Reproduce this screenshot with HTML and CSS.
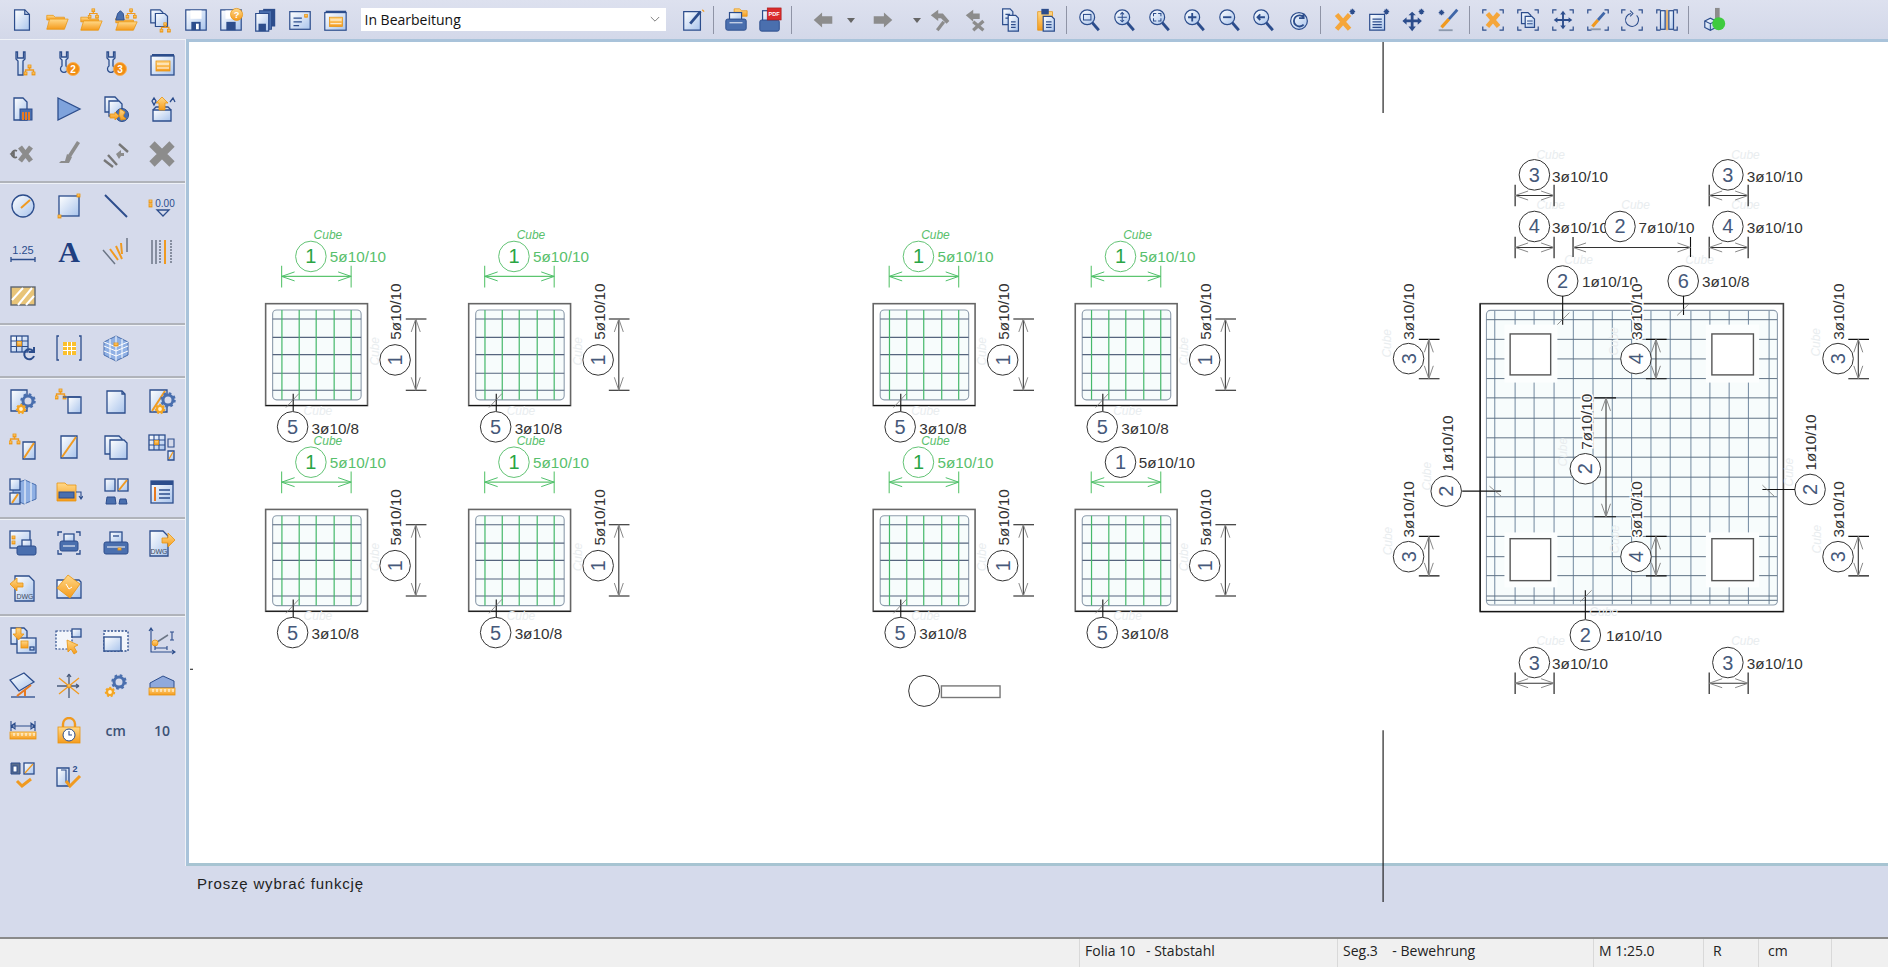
FILE: index.html
```html
<!DOCTYPE html>
<html lang="de">
<head>
  <meta charset="UTF-8" />
  <title>Bewehrung</title>
  <link rel="stylesheet" href="styles.css">
</head>
<body>
  <svg class="sprites" aria-hidden="true">
    <defs>
      <linearGradient id="gb" x1="0" y1="0" x2="1" y2="1"><stop offset="0" stop-color="#ffffff"/><stop offset="1" stop-color="#a9c4ec"/></linearGradient>
      <linearGradient id="ga" x1="0" y1="0" x2="0" y2="1"><stop offset="0" stop-color="#ffd98a"/><stop offset="1" stop-color="#f59b1c"/></linearGradient>
      <marker id="ah" markerUnits="userSpaceOnUse" orient="auto-start-reverse" overflow="visible" markerWidth="14" markerHeight="10"><path class="head" d="M-13 -4.5L0 0L-13 4.5"/></marker>
      <marker id="ahg" markerUnits="userSpaceOnUse" orient="auto-start-reverse" overflow="visible" markerWidth="14" markerHeight="10"><path class="head-g" d="M-13 -4.5L0 0L-13 4.5"/></marker>

      <g id="tree"><rect class="a" x="4" y="0" width="3" height="3"/><path class="so" d="M5.5 3v2M1.5 7V5h8v2"/><rect class="a" x="0" y="7" width="3" height="3"/><rect class="a" x="8" y="7" width="3" height="3"/></g>
      <g id="gear"><circle class="gear" r="5"/><circle class="gear-t" r="6.5"/></g>
      <g id="gear-o"><circle class="gear-a" r="3"/><circle class="gear-at" r="4.2"/></g>
      <g id="brk"><path class="s" d="M3 7V3h4M21 3h4v4M25 21v4h-4M7 25H3v-4"/></g>
      <g id="mag"><circle class="o" cx="11" cy="11" r="8"/><path class="h" d="M16.5 17l7 8"/></g>
      <path id="star-b" class="s" d="M0 -3v6M-3 0h6M-2 -2l4 4M2 -2l-4 4"/>

      <symbol id="doc" viewBox="0 0 28 28"><path class="o" d="M6 3h11l5 5v17H6z"/><path class="s" d="M17 3v5h5"/></symbol>
      <symbol id="folder" viewBox="0 0 28 28"><path class="a" d="M3 9h7l2 2h10v3H3z"/><path class="a" d="M3 24l3-11h20l-4 11z"/></symbol>
      <symbol id="folder-t" viewBox="0 0 28 28"><path class="a" d="M3 11h7l2 2h10v3H3z"/><path class="a" d="M3 25l3-10h20l-4 10z"/><use href="#tree" x="11" y="2"/></symbol>
      <symbol id="folder-b" viewBox="0 0 28 28"><path class="a" d="M3 12h7l2 2h10v3H3z"/><path class="a" d="M3 25l3-9h20l-4 9z"/><path class="db" d="M3 14l2-7 3-3 3 3 1 7z"/><use href="#tree" x="14" y="2"/></symbol>
      <symbol id="docs-t" viewBox="0 0 28 28"><path class="o" d="M3 3h10l3 3v11H3z"/><path class="o" d="M8 7h10l3 3v11H8z"/><use href="#tree" x="13" y="17"/></symbol>
      <symbol id="save" viewBox="0 0 28 28"><path class="o" d="M3 3h22v22H3z"/><rect class="w" x="8" y="3.700" width="12" height="9"/><rect class="d" x="9" y="16" width="10" height="9"/><rect class="w" x="14" y="18" width="3" height="6"/></symbol>
      <symbol id="save-q" viewBox="0 0 28 28"><path class="o" d="M3 3h22v22H3z"/><rect class="w" x="8" y="3.700" width="8" height="9"/><rect class="d" x="9" y="16" width="10" height="9"/><circle class="a" cx="20" cy="8" r="6.500"/><text class="ic-t-w" x="20" y="12">?</text></symbol>
      <symbol id="save-all" viewBox="0 0 28 28"><rect class="d" x="12" y="2" width="13" height="19"/><rect class="db" x="8" y="4" width="13" height="20"/><path class="o" d="M4 7h14v19H4z"/><rect class="d" x="7" y="18" width="8" height="8"/></symbol>
      <symbol id="card" viewBox="0 0 28 28"><rect class="o" x="3" y="5" width="22" height="19"/><path class="s" d="M7 12h9M7 16h9M7 20h6"/><rect class="a" x="19" y="8" width="3" height="3"/></symbol>
      <symbol id="list" viewBox="0 0 28 28"><path class="d" d="M4 4h22v3H4z"/><rect class="o" x="3" y="6" width="23" height="19"/><rect class="a" x="8" y="11" width="14" height="10"/><path class="sw" d="M9 14h12M9 18h12"/></symbol>
      <symbol id="edit" viewBox="0 0 28 28"><path class="o" d="M4 5h18v20H4z"/><path class="h" d="M11 18l11-13"/><path class="so" d="M24 3l2 2"/></symbol>
      <symbol id="print-f" viewBox="0 0 28 28"><path class="a" d="M12 2h6l2 2h6v6H12z"/><rect class="o" x="7" y="6" width="13" height="9"/><rect class="db" x="3" y="13" width="22" height="12" rx="2"/><path class="sw" d="M7 17h14"/></symbol>
      <symbol id="print-p" viewBox="0 0 28 28"><rect class="o" x="6" y="4" width="13" height="11"/><rect class="db" x="3" y="14" width="21" height="12" rx="2"/><rect class="red" x="11" y="1" width="15" height="13"/><text class="ic-t-p" x="18.500" y="10">PDF</text></symbol>
      <symbol id="arr-l" viewBox="0 0 28 28"><path class="g" d="M4 14l9-8v4h11v8H13v4z"/></symbol>
      <symbol id="arr-r" viewBox="0 0 28 28"><path class="g" d="M24 14l-9-8v4H4v8h11v4z"/></symbol>
      <symbol id="caret" viewBox="0 0 12 28"><path class="gd" d="M2 12h8l-4 5z"/></symbol>
      <symbol id="undo" viewBox="0 0 28 28"><path class="g" d="M3 9l8-6v4h5l7 8-3 3-6-6h-3v3z"/><path class="hg3" d="M10 25l7-9"/></symbol>
      <symbol id="redo" viewBox="0 0 28 28"><path class="g" d="M3 9l8-6v4h7v6h-7v3z"/><path class="hg3" d="M11 16l11 9M22 15L11 25"/></symbol>
      <symbol id="copy" viewBox="0 0 28 28"><path class="o" d="M5 2h8l3 3v14H5z"/><path class="o" d="M11 9h8l3 3v14H11z"/><path class="s" d="M8 8h5M8 12h3M14 16h5M14 19h5M14 22h5"/></symbol>
      <symbol id="paste" viewBox="0 0 28 28"><path class="a" d="M5 5h16v20H5z"/><rect class="d" x="9" y="2" width="8" height="6"/><path class="o" d="M11 10h9l3 3v13H11z"/><path class="s" d="M14 16h6M14 19h6M14 22h6"/></symbol>
      <symbol id="z-win" viewBox="0 0 28 28"><use href="#mag"/><rect class="sd" x="7" y="8" width="8" height="6"/></symbol>
      <symbol id="z-mv" viewBox="0 0 28 28"><use href="#mag"/><path class="sd" d="M11 6v10M6 11h10"/><path class="sd" d="M9 8l2-2 2 2M9 14l2 2 2-2"/></symbol>
      <symbol id="z-fit" viewBox="0 0 28 28"><use href="#mag"/><path class="sd" d="M7 10V7h3M12 7h3v3M15 12v3h-3M10 15H7v-3"/></symbol>
      <symbol id="z-in" viewBox="0 0 28 28"><use href="#mag"/><path class="hb" d="M11 6.500v9M6.500 11h9"/></symbol>
      <symbol id="z-out" viewBox="0 0 28 28"><use href="#mag"/><path class="hb" d="M6.500 11h9"/></symbol>
      <symbol id="z-back" viewBox="0 0 28 28"><use href="#mag"/><path class="hb" d="M7 11h8M10 8l-3 3 3 3"/></symbol>
      <symbol id="refresh" viewBox="0 0 28 28"><circle class="o" cx="14" cy="15" r="9"/><path class="hb" d="M19 11a6 6 0 1 0 0 8M19 7v5h-5"/></symbol>
      <symbol id="x-p" viewBox="0 0 28 28"><path class="xo" d="M6 8l14 16M20 8L6 24"/><use href="#star-b" x="23" y="5"/></symbol>
      <symbol id="doc-p" viewBox="0 0 28 28"><path class="o" d="M4 8h16v17H4z"/><path class="s" d="M7 13h10M7 16h10M7 19h10M7 22h10"/><use href="#star-b" x="22" y="5"/></symbol>
      <symbol id="mv-p" viewBox="0 0 28 28"><path class="d" d="M12 5l4 4h-2.500v4.500H18V11l4.500 4-4.500 4v-2.500h-4.500V21H16l-4 5-4-5h2.500v-4.500H6V19l-4.500-4L6 11v2.500h4.500V9H8z"/><use href="#star-b" x="22" y="5"/></symbol>
      <symbol id="pen-p" viewBox="0 0 28 28"><path class="hg" d="M4 25h15"/><path class="ha" d="M7 22l8-9"/><path class="hb3" d="M15 13l9-10"/><use href="#star-b" x="7" y="6"/></symbol>
      <symbol id="b-x" viewBox="0 0 28 28"><use href="#brk"/><path class="xo" d="M8 7l12 14M20 7L8 21"/></symbol>
      <symbol id="b-doc" viewBox="0 0 28 28"><use href="#brk"/><path class="o" d="M7 6h7l3 3v9H7z"/><path class="o" d="M11 10h7l3 3v9H11z"/><path class="sd" d="M13 15h6M13 18h6"/></symbol>
      <symbol id="b-mv" viewBox="0 0 28 28"><use href="#brk"/><path class="hb" d="M14 6v16M6 14h16"/><path class="d" d="M11 8l3-4 3 4zM11 20l3 4 3-4zM8 11l-4 3 4 3zM20 11l4 3-4 3z"/></symbol>
      <symbol id="b-pen" viewBox="0 0 28 28"><use href="#brk"/><path class="hg" d="M6 24h11"/><path class="ha" d="M8 21l6-7"/><path class="hb3" d="M14 14l7-8"/></symbol>
      <symbol id="b-rot" viewBox="0 0 28 28"><use href="#brk"/><path class="sd" d="M19 9a7 7 0 1 1-6-2M12 4l3 3-3 3"/></symbol>
      <symbol id="b-col" viewBox="0 0 28 28"><use href="#brk"/><rect class="o" x="7" y="4" width="5" height="20"/><rect class="o" x="16" y="4" width="5" height="20"/><path class="so" d="M14 3v22"/></symbol>
      <symbol id="globe" viewBox="0 0 28 28"><rect class="g" x="14" y="1" width="5" height="12"/><path class="o" d="M3 15l6-3 6 3v7l-6 3-6-3z"/><path class="sd" d="M3 15l6 3 6-3M9 18v7"/><circle class="green" cx="18" cy="18" r="7"/></symbol>

      <symbol id="wr-t" viewBox="0 0 28 28"><path class="o" d="M7 2v7l2 2v14h5V11l2-2V2l-1.500 0v6h-6V2z"/><use href="#tree" x="15" y="15"/></symbol>
      <symbol id="wr-2" viewBox="0 0 28 28"><path class="o" d="M5 2v6l2 2v6a3.500 3.500 0 1 0 4 0v-6l2-2V2h-1.500v5h-5V2z"/><circle class="a2" cx="18" cy="19" r="6.500"/><text class="ic-t-w" x="18" y="23">2</text></symbol>
      <symbol id="wr-3" viewBox="0 0 28 28"><path class="o" d="M5 2v6l2 2v6a3.500 3.500 0 1 0 4 0v-6l2-2V2h-1.500v5h-5V2z"/><circle class="a2" cx="18" cy="19" r="6.500"/><text class="ic-t-w" x="18" y="23">3</text></symbol>
      <symbol id="doc-c" viewBox="0 0 28 28"><path class="o" d="M5 3h9l4 4v18H5z"/><rect class="db" x="11" y="14" width="12" height="11"/><path class="sa" d="M14 17v8M17 17v8M20 17v8"/></symbol>
      <symbol id="play" viewBox="0 0 28 28"><path class="op" d="M3 3l22 11L3 25z"/></symbol>
      <symbol id="docs-g" viewBox="0 0 28 28"><path class="o" d="M3 2h10l3 3v12H3z"/><path class="o" d="M7 6h10l3 3v12H7z"/><circle class="db" cx="20" cy="20" r="6.500"/><path class="a" d="M18 14l5 3-2 4 3 3-5 1-2-5zM8 19h5v-2l4 4-4 4v-2H8z"/></symbol>
      <symbol id="box-up" viewBox="0 0 28 28"><path class="o" d="M5 15h18v11H5z"/><path class="s" d="M5 15l3-3h12l3 3"/><path class="a" d="M14 2l6 6h-3v7h-6V8H8z"/><path class="s" d="M4 6l2-3 2 3-2 4zM22 7l3-4 2 4"/></symbol>
      <symbol id="g-x1" viewBox="0 0 28 28"><path class="xg" d="M11 7l11 14M22 7L11 21"/><path class="gd-s" d="M8 11a3.500 3.500 0 1 0 0 6M2 14l3-2v4z"/></symbol>
      <symbol id="g-brush" viewBox="0 0 28 28"><path class="g" d="M22 1l3 2-9 14-3-2z"/><path class="g" d="M12 14l5 3-3 6H4l2-2h4z"/></symbol>
      <symbol id="g-lines" viewBox="0 0 28 28"><path class="hg2" d="M2 20l9 7M6 15l9 10M17 4l9 8"/><path class="g" d="M14 14l5-4v3h3v3h-3l-2 3z"/></symbol>
      <symbol id="g-x" viewBox="0 0 28 28"><path class="xg2" d="M4 4l20 20M24 4L4 24"/></symbol>
      <symbol id="dial" viewBox="0 0 28 28"><circle class="o" cx="14" cy="14" r="11"/><path class="so2" d="M12 16l9-8"/></symbol>
      <symbol id="rect" viewBox="0 0 28 28"><rect class="o" x="4" y="4" width="20" height="20"/><rect class="a" x="22" y="2" width="3" height="3"/><rect class="a" x="3" y="23" width="3" height="3"/></symbol>
      <symbol id="line" viewBox="0 0 28 28"><path class="hb" d="M3 3l22 22"/></symbol>
      <symbol id="level" viewBox="0 0 28 28"><text class="ic-t-d" x="17" y="15">0.00</text><path class="s" d="M9 18h12l-6 6z"/><rect class="a" x="1" y="8" width="3" height="3"/><rect class="a" x="1" y="12" width="3" height="3"/></symbol>
      <symbol id="dim" viewBox="0 0 28 28"><text class="ic-t-l" x="14" y="17">1.25</text><path class="s" d="M2 20v5M26 20v5M2 22.500h24"/></symbol>
      <symbol id="letter" viewBox="0 0 28 28"><text class="ic-t-a" x="14" y="25">A</text></symbol>
      <symbol id="l-o" viewBox="0 0 28 28"><path class="sg" d="M1 13l12 14M25 1v14"/><path class="so2" d="M8 12l8 11M14 9l6 13M19 6l1 11"/></symbol>
      <symbol id="l-v" viewBox="0 0 28 28"><path class="sg" d="M4 3v24M8 3v24"/><path class="sg-d" d="M12 3v24M23 3v24"/><path class="so2" d="M17 3v24"/></symbol>
      <symbol id="hatch" viewBox="0 0 28 28"><rect class="a3" x="2" y="5" width="24" height="18"/><path class="sw2" d="M3 18L14 6M9 23l14-17M17 23l8-9"/></symbol>
      <symbol id="g-ref" viewBox="0 0 28 28"><rect class="o" x="2" y="2" width="17" height="16"/><path class="sd" d="M2 7h17M2 12.500h17M7.500 2v16M13 2v16"/><rect class="a" x="8" y="7.500" width="4.500" height="4.500"/><path class="hb" d="M24 17a5 5 0 1 0 1 5M25 13v5h-5"/></symbol>
      <symbol id="b-g" viewBox="0 0 28 28"><path class="s" d="M4 2H2v24h2M24 2h2v24h-2"/><rect class="ye" x="8" y="8" width="13" height="13"/><path class="sw" d="M8 12.500h13M8 16.500h13M12.500 8v13M16.500 8v13"/></symbol>
      <symbol id="cube" viewBox="0 0 28 28"><path class="cu" d="M2 8l12-6 12 6v13l-12 6-12-6z"/><path class="sw" d="M2 12l12 5 12-5M2 17l12 5 12-5M8 5v19M14 2v25M20 5v19M2 8l12 5 12-5"/><rect class="a" x="12" y="9" width="4" height="3"/></symbol>
      <symbol id="p-gear" viewBox="0 0 28 28"><path class="o" d="M2 2h16v21H2z"/><use href="#gear" x="19" y="13"/><use href="#gear-o" x="12" y="21"/></symbol>
      <symbol id="t-p" viewBox="0 0 28 28"><use href="#tree" x="0" y="1"/><path class="o" d="M13 9h13v16H13z"/><path class="s" d="M8 9h17"/></symbol>
      <symbol id="page" viewBox="0 0 28 28"><path class="o" d="M5 3h15l3 3v19H5z"/><path class="s" d="M20 3v3h3"/></symbol>
      <symbol id="p-sg" viewBox="0 0 28 28"><path class="o" d="M2 2h17v22H2z"/><path class="so2" d="M4 23L17 3"/><use href="#gear" x="20" y="12"/><use href="#gear-o" x="12" y="21"/></symbol>
      <symbol id="t-s" viewBox="0 0 28 28"><use href="#tree" x="0" y="1"/><path class="o" d="M14 9h12v17H14z"/><path class="so2" d="M15 25L25 10"/></symbol>
      <symbol id="s-p" viewBox="0 0 28 28"><path class="o" d="M6 3h16v22H6z"/><path class="so2" d="M7 24L21 4"/></symbol>
      <symbol id="pages" viewBox="0 0 28 28"><path class="o" d="M3 3h14l3 3v15H3z"/><path class="o" d="M8 7h14l3 3v16H8z"/></symbol>
      <symbol id="g-p" viewBox="0 0 28 28"><rect class="o" x="1" y="2" width="16" height="15"/><path class="sd" d="M1 7h16M1 12h16M6 2v15M11 2v15"/><rect class="a" x="6.500" y="7.500" width="4" height="4"/><path class="sd" d="M20 6h6v8h-6z"/><path class="o" d="M20 18h6v9h-6z"/><path class="so" d="M21 26l4-7"/></symbol>
      <symbol id="c-p" viewBox="0 0 28 28"><path class="cu" d="M4 6l12-4 11 5v14l-12 5-11-5z"/><path class="sw" d="M16 2v24M22 4v20"/><rect class="o" x="1" y="1" width="10" height="11"/><rect class="o" x="1" y="15" width="10" height="11"/><path class="so2" d="M3 25l6-9"/></symbol>
      <symbol id="f-a" viewBox="0 0 28 28"><path class="a" d="M2 5h8l2 2h9v16H2z"/><rect class="db" x="4" y="14" width="15" height="6"/><path class="sd" d="M21 14h5v6M24 18l2 3 2-3"/></symbol>
      <symbol id="p-w" viewBox="0 0 28 28"><rect class="o" x="3" y="1" width="10" height="12"/><rect class="o" x="16" y="1" width="10" height="12"/><path class="so2" d="M17 12l8-10"/><path class="db" d="M4 26l1-7h8l1 7zM17 26l1-5h6l1 5z"/></symbol>
      <symbol id="panel" viewBox="0 0 28 28"><rect class="o" x="3" y="3" width="22" height="22"/><path class="d" d="M3 3h22v4H3z"/><path class="sa" d="M7 9v14"/><path class="s" d="M11 12h11M11 16h11M11 20h11"/></symbol>
      <symbol id="w-print" viewBox="0 0 28 28"><rect class="o" x="1" y="2" width="20" height="17"/><rect class="a" x="3" y="7" width="3" height="3"/><rect class="a" x="3" y="12" width="3" height="3"/><rect class="o" x="13" y="11" width="9" height="8"/><rect class="db" x="8" y="17" width="19" height="9" rx="2"/></symbol>
      <symbol id="b-print" viewBox="0 0 28 28"><use href="#brk"/><rect class="o" x="9" y="5" width="10" height="8"/><rect class="db" x="5" y="12" width="18" height="10" rx="2"/><path class="sw" d="M8 17h12"/></symbol>
      <symbol id="print" viewBox="0 0 28 28"><rect class="o" x="8" y="3" width="12" height="11"/><path class="s" d="M11 7h6"/><rect class="db" x="2" y="13" width="24" height="12" rx="2"/><path class="sw" d="M5 18h18"/><rect class="a" x="16" y="19" width="3" height="2"/></symbol>
      <symbol id="dwg-o" viewBox="0 0 28 28"><path class="o" d="M2 2h13l5 5v20H2z"/><path class="a" d="M14 9h6V4l7 7-7 7v-4h-6z"/><text class="ic-t-s" x="11" y="25">DWG</text></symbol>
      <symbol id="dwg-i" viewBox="0 0 28 28"><path class="o" d="M6 2h14l5 5v20H6z"/><path class="a" d="M14 9H8V4l-7 6 7 7v-4h6z"/><text class="ic-t-s" x="16" y="25">DWG</text></symbol>
      <symbol id="tag" viewBox="0 0 28 28"><path class="o" d="M2 6h22l2 2v16H2z"/><path class="a" d="M13 1l12 9-10 14L2 14z"/><path class="sw" d="M11 10l3 5 3-2"/></symbol>
      <symbol id="d-dn" viewBox="0 0 28 28"><path class="o" d="M2 1h13l3 3v13H2z"/><rect class="o" x="8" y="11" width="19" height="15"/><rect class="a" x="12" y="14" width="7" height="7"/><path class="a" d="M7 1h5v6h3l-5.500 6L4 7h3z"/><rect class="s" x="21" y="20" width="4" height="3"/></symbol>
      <symbol id="s-cur" viewBox="0 0 28 28"><rect class="sdash" x="1" y="4" width="16" height="18"/><rect class="o" x="17" y="2" width="9" height="8"/><path class="a" d="M12 13l11 5-4 2 3 5-3 2-3-5-3 3z"/></symbol>
      <symbol id="d-win" viewBox="0 0 28 28"><rect class="sdash2" x="2" y="4" width="24" height="20"/><rect class="o" x="2" y="10" width="17" height="14"/></symbol>
      <symbol id="axes" viewBox="0 0 28 28"><path class="sd" d="M3 1v24h24M1 4l2-3 2 3M24 23l3 2-3 2"/><path class="sg" d="M6 17l14-9"/><circle class="a" cx="7" cy="16" r="3"/><path class="sd" d="M22 5h4M24 5v8M22 13h4M7 21h12M7 19v4M19 19v4"/></symbol>
      <symbol id="plane" viewBox="0 0 28 28"><path class="o" d="M1 8L15 1l10 9-15 9z"/><path class="s" d="M2 25h24"/><path class="sa" d="M8 24l14-11M16 24v-6"/></symbol>
      <symbol id="star" viewBox="0 0 28 28"><path class="so" d="M4 6l20 16M24 6L4 22"/><path class="sg-d2" d="M14 2v24M2 14h22M14 2l-2 3M14 2l2 3M24 14l-3-2M24 14l-3 2"/><circle class="a" cx="14" cy="14" r="2"/></symbol>
      <symbol id="gears" viewBox="0 0 28 28"><use href="#gear" x="17" y="10"/><use href="#gear-o" x="8" y="20"/></symbol>
      <symbol id="ruler-r" viewBox="0 0 28 28"><path class="db2" d="M2 16V11L15 4l11 5v7z"/><rect class="a" x="1" y="16" width="26" height="7"/><path class="sw" d="M5 17v3M9 17v3M13 17v3M17 17v3M21 17v3M25 17v3"/></symbol>
      <symbol id="ruler-d" viewBox="0 0 28 28"><path class="sd" d="M2 4v10M26 4v10M2 9h24M2 9l4-3v6zM26 9l-4-3v6z"/><rect class="a" x="1" y="15" width="26" height="7"/><path class="sw" d="M5 16v3M9 16v3M13 16v3M17 16v3M21 16v3M25 16v3"/></symbol>
      <symbol id="lock" viewBox="0 0 28 28"><path class="sa3" d="M8 11V7a6 6 0 0 1 12 0v4"/><rect class="a" x="3" y="10" width="22" height="16"/><circle class="w-s" cx="14" cy="18" r="6"/><path class="sd" d="M14 14v4h3"/></symbol>
      <symbol id="pp-c" viewBox="0 0 28 28"><path class="gp" d="M2 1h9v11H2z"/><rect class="w-s" x="4" y="4" width="4" height="6"/><rect class="o" x="15" y="1" width="10" height="11"/><path class="so" d="M16 11l8-9"/><path class="so3" d="M8 19l5 5 9-7"/></symbol>
      <symbol id="p2-c" viewBox="0 0 28 28"><path class="o" d="M2 6h12v18H2z"/><path class="sd" d="M6 8h5v12"/><text class="ic-t-sup" x="20" y="10">2</text><path class="so3" d="M11 19l4 5 10-10"/></symbol>

      <g id="n1" class="cad"><circle class="bub" r="15.300"/><text class="num" y="7">1</text></g>
      <g id="n2" class="cad"><circle class="bub" r="15.300"/><text class="num" y="7">2</text></g>
      <g id="n3" class="cad"><circle class="bub" r="15.300"/><text class="num" y="7">3</text></g>
      <g id="n4" class="cad"><circle class="bub" r="15.300"/><text class="num" y="7">4</text></g>
      <g id="n5" class="cad"><circle class="bub" r="15.300"/><text class="num" y="7">5</text></g>
      <g id="n6" class="cad"><circle class="bub" r="15.300"/><text class="num" y="7">6</text></g>
      <g id="ng" class="cad"><circle class="bub-g" r="15.300"/><text class="num-g" y="7">1</text></g>

      <g id="dim-g"><path class="tick-g" d="M16 -38V-16.300M85.600 -38V-16.300"/><path class="dim-g" d="M16 -27.300H85.600"/></g>
      <g id="top-g" class="cad"><text class="cube-g" x="48" y="-65">Cube</text><use href="#ng" x="45.300" y="-47.300"/><text class="lab-g" x="64.300" y="-41.700">5ø10/10</text><use href="#dim-g"/></g>

      <g id="sec" class="cad">
        <rect class="out" width="102" height="102"/>
        <path class="out-d" d="M0 102H102"/>
        <rect class="inner" x="7" y="6.300" width="88.600" height="90" rx="4"/>
        <path class="bar-k" d="M7 15.300H95.600M7 33.700H95.600M7 51H95.600M7 69.700H95.600M7 86.700H95.600"/>
        <path class="bar-g" d="M16.300 6.300V96.300M33.600 6.300V96.300M50.600 6.300V96.300M68.600 6.300V96.300M85.600 6.300V96.300"/>
        <path class="ld" d="M27.600 90.300V108"/>
        <path class="tk" d="M20.300 104L33.300 90"/>
        <text class="cube-f" x="38" y="111">Cube</text>
        <use href="#n5" x="27" y="123.300"/>
        <text class="lab" x="46" y="130">3ø10/8</text>
        <path class="ld" d="M140.300 15.300H161M140.300 86.700H161"/>
        <path class="dim" d="M150.300 15.300V86.700"/>
        <use href="#n1" transform="translate(129.600 56.300) rotate(-90)"/>
        <text class="lab" transform="translate(136 36) rotate(-90)">5ø10/10</text>
        <text class="cube-f" transform="translate(113 62) rotate(-90)">Cube</text>
      </g>
      <g id="dh"><path class="ld" d="M0 -10.700V10.700M39 -10.700V10.700"/><path class="dim" d="M0 0H39"/></g>
      <g id="dv"><path class="ld" d="M0 0H20.700M0 39.500H20.700"/><path class="dim" d="M10 0V39.500"/></g>
    </defs>
  </svg>

  <header class="toolbar">
    <span class="tb"><svg class="ic"><use href="#doc"/></svg></span>
    <span class="tb"><svg class="ic"><use href="#folder"/></svg></span>
    <span class="tb"><svg class="ic"><use href="#folder-t"/></svg></span>
    <span class="tb"><svg class="ic"><use href="#folder-b"/></svg></span>
    <span class="tb"><svg class="ic"><use href="#docs-t"/></svg></span>
    <span class="tb"><svg class="ic"><use href="#save"/></svg></span>
    <span class="tb"><svg class="ic"><use href="#save-q"/></svg></span>
    <span class="tb"><svg class="ic"><use href="#save-all"/></svg></span>
    <span class="tb"><svg class="ic"><use href="#card"/></svg></span>
    <span class="tb"><svg class="ic"><use href="#list"/></svg></span>
    <div class="combo"><span>In Bearbeitung</span><svg class="chev" viewBox="0 0 12 8"><path d="M1 1l5 5 5-5"/></svg></div>
    <span class="tb after-combo"><svg class="ic"><use href="#edit"/></svg></span>
    <i class="sep sep-a"></i>
    <span class="tb"><svg class="ic"><use href="#print-f"/></svg></span>
    <span class="tb"><svg class="ic"><use href="#print-p"/></svg></span>
    <i class="sep sep-w"></i>
    <span class="tb nav-l"><svg class="ic"><use href="#arr-l"/></svg></span>
    <span class="tb nav-c"><svg class="ic-c"><use href="#caret"/></svg></span>
    <span class="tb nav-r"><svg class="ic"><use href="#arr-r"/></svg></span>
    <span class="tb nav-c2"><svg class="ic-c"><use href="#caret"/></svg></span>
    <span class="tb"><svg class="ic"><use href="#undo"/></svg></span>
    <span class="tb"><svg class="ic"><use href="#redo"/></svg></span>
    <span class="tb"><svg class="ic"><use href="#copy"/></svg></span>
    <span class="tb"><svg class="ic"><use href="#paste"/></svg></span>
    <i class="sep"></i>
    <span class="tb"><svg class="ic"><use href="#z-win"/></svg></span>
    <span class="tb"><svg class="ic"><use href="#z-mv"/></svg></span>
    <span class="tb"><svg class="ic"><use href="#z-fit"/></svg></span>
    <span class="tb"><svg class="ic"><use href="#z-in"/></svg></span>
    <span class="tb"><svg class="ic"><use href="#z-out"/></svg></span>
    <span class="tb"><svg class="ic"><use href="#z-back"/></svg></span>
    <span class="tb"><svg class="ic"><use href="#refresh"/></svg></span>
    <i class="sep"></i>
    <span class="tb"><svg class="ic"><use href="#x-p"/></svg></span>
    <span class="tb"><svg class="ic"><use href="#doc-p"/></svg></span>
    <span class="tb"><svg class="ic"><use href="#mv-p"/></svg></span>
    <span class="tb"><svg class="ic"><use href="#pen-p"/></svg></span>
    <i class="sep"></i>
    <span class="tb"><svg class="ic"><use href="#b-x"/></svg></span>
    <span class="tb"><svg class="ic"><use href="#b-doc"/></svg></span>
    <span class="tb"><svg class="ic"><use href="#b-mv"/></svg></span>
    <span class="tb"><svg class="ic"><use href="#b-pen"/></svg></span>
    <span class="tb"><svg class="ic"><use href="#b-rot"/></svg></span>
    <span class="tb"><svg class="ic"><use href="#b-col"/></svg></span>
    <i class="sep sep-w"></i>
    <span class="tb"><svg class="ic"><use href="#globe"/></svg></span>
  </header>

  <div class="main">
    <aside class="panel">
      <section class="pgroup g1">
        <svg class="ic"><use href="#wr-t"/></svg><svg class="ic"><use href="#wr-2"/></svg><svg class="ic"><use href="#wr-3"/></svg><svg class="ic"><use href="#list"/></svg>
        <svg class="ic"><use href="#doc-c"/></svg><svg class="ic"><use href="#play"/></svg><svg class="ic"><use href="#docs-g"/></svg><svg class="ic"><use href="#box-up"/></svg>
        <svg class="ic"><use href="#g-x1"/></svg><svg class="ic"><use href="#g-brush"/></svg><svg class="ic"><use href="#g-lines"/></svg><svg class="ic"><use href="#g-x"/></svg>
      </section>
      <section class="pgroup g2">
        <svg class="ic"><use href="#dial"/></svg><svg class="ic"><use href="#rect"/></svg><svg class="ic"><use href="#line"/></svg><svg class="ic"><use href="#level"/></svg>
        <svg class="ic"><use href="#dim"/></svg><svg class="ic"><use href="#letter"/></svg><svg class="ic"><use href="#l-o"/></svg><svg class="ic"><use href="#l-v"/></svg>
        <svg class="ic"><use href="#hatch"/></svg>
      </section>
      <section class="pgroup g3">
        <svg class="ic"><use href="#g-ref"/></svg><svg class="ic"><use href="#b-g"/></svg><svg class="ic"><use href="#cube"/></svg>
      </section>
      <section class="pgroup g4">
        <svg class="ic"><use href="#p-gear"/></svg><svg class="ic"><use href="#t-p"/></svg><svg class="ic"><use href="#page"/></svg><svg class="ic"><use href="#p-sg"/></svg>
        <svg class="ic"><use href="#t-s"/></svg><svg class="ic"><use href="#s-p"/></svg><svg class="ic"><use href="#pages"/></svg><svg class="ic"><use href="#g-p"/></svg>
        <svg class="ic"><use href="#c-p"/></svg><svg class="ic"><use href="#f-a"/></svg><svg class="ic"><use href="#p-w"/></svg><svg class="ic"><use href="#panel"/></svg>
      </section>
      <section class="pgroup g5">
        <svg class="ic"><use href="#w-print"/></svg><svg class="ic"><use href="#b-print"/></svg><svg class="ic"><use href="#print"/></svg><svg class="ic"><use href="#dwg-o"/></svg>
        <svg class="ic"><use href="#dwg-i"/></svg><svg class="ic"><use href="#tag"/></svg>
      </section>
      <section class="pgroup g6">
        <svg class="ic"><use href="#d-dn"/></svg><svg class="ic"><use href="#s-cur"/></svg><svg class="ic"><use href="#d-win"/></svg><svg class="ic"><use href="#axes"/></svg>
        <svg class="ic"><use href="#plane"/></svg><svg class="ic"><use href="#star"/></svg><svg class="ic"><use href="#gears"/></svg><svg class="ic"><use href="#ruler-r"/></svg>
        <svg class="ic"><use href="#ruler-d"/></svg><svg class="ic"><use href="#lock"/></svg><span class="ptext">cm</span><span class="ptext">10</span>
        <svg class="ic"><use href="#pp-c"/></svg><svg class="ic"><use href="#p2-c"/></svg>
      </section>
    </aside>

    <main class="canvas">
      <svg class="drawing cad" viewBox="189 42 1699 822">
        <!-- sheet frame -->
        <path class="ld" d="M1383.500 42V113M1383.500 731V903M189 670H192"/>

        <!-- first group of sections -->
        <use href="#top-g" x="264.700" y="304"/><use href="#sec" x="264.700" y="304"/>
        <use href="#top-g" x="468" y="304"/><use href="#sec" x="468" y="304"/>
        <use href="#top-g" x="264.700" y="510"/><use href="#sec" x="264.700" y="510"/>
        <use href="#top-g" x="468" y="510"/><use href="#sec" x="468" y="510"/>

        <!-- second group of sections -->
        <use href="#top-g" x="873" y="304"/><use href="#sec" x="873" y="304"/>
        <use href="#top-g" x="1075.300" y="304"/><use href="#sec" x="1075.300" y="304"/>
        <use href="#top-g" x="873" y="510"/><use href="#sec" x="873" y="510"/>
        <use href="#dim-g" x="1075.300" y="510"/><use href="#sec" x="1075.300" y="510"/>
        <use href="#n1" x="1120.600" y="462.700"/>
        <text class="lab" x="1139" y="468.500">5ø10/10</text>

        <!-- column symbol -->
        <circle class="bub" cx="924" cy="691.700" r="15.500"/>
        <rect class="out-thin" x="941.300" y="686.700" width="58.700" height="11.600"/>

        <!-- big slab -->
        <rect class="out-big" x="1480.700" y="304" width="303.600" height="308.300"/>
        <path class="out-d" d="M1480.700 612.300H1784.300M1480.700 304V612.300"/>
        <rect class="inner" x="1487" y="310.700" width="291.300" height="295" rx="4"/>
        <path class="bar-b" d="M1495.300 311V605M1515.700 311V605M1534.700 311V605M1554.700 311V605M1574 311V605M1593.700 311V605M1613 311V605M1632.300 311V605M1651.700 311V605M1671 311V605M1691.700 311V605M1710.700 311V605M1730 311V605M1749.300 311V605M1770 311V605"/>
        <path class="bar-h" d="M1487 320H1778M1487 339.700H1778M1487 359.300H1778M1487 379H1778M1487 398.300H1778M1487 418.700H1778M1487 438.300H1778M1487 457.700H1778M1487 477.700H1778M1487 497.300H1778M1487 517.300H1778M1487 537H1778M1487 557.300H1778M1487 576.300H1778M1487 596.700H1778M1487 601H1778"/>
        <rect class="halo" x="1505" y="325" width="53" height="58"/>
        <rect class="halo" x="1706.700" y="325" width="53.300" height="58"/>
        <rect class="halo" x="1505" y="533" width="53" height="55"/>
        <rect class="halo" x="1706.700" y="533" width="53.300" height="55"/>
        <rect class="hole" x="1510.700" y="334.300" width="40.600" height="41"/>
        <rect class="hole" x="1712.700" y="334.300" width="41.600" height="41"/>
        <rect class="hole" x="1510.700" y="539.300" width="40.600" height="42"/>
        <rect class="hole" x="1712.700" y="539.300" width="41.600" height="42"/>

        <!-- ghost labels -->
        <text class="cube-f" x="1537" y="159">Cube</text>
        <text class="cube-f" x="1537" y="209">Cube</text>
        <text class="cube-f" x="1622" y="209">Cube</text>
        <text class="cube-f" x="1732" y="159">Cube</text>
        <text class="cube-f" x="1732" y="209">Cube</text>
        <text class="cube-f" x="1565" y="264">Cube</text>
        <text class="cube-f" x="1686" y="264">Cube</text>
        <text class="cube-f" x="1590" y="617">Cube</text>
        <text class="cube-f" x="1537" y="646">Cube</text>
        <text class="cube-f" x="1732" y="646">Cube</text>
        <text class="cube-f" transform="translate(1391 358) rotate(-90)">Cube</text>
        <text class="cube-f" transform="translate(1821 357) rotate(-90)">Cube</text>
        <text class="cube-f" transform="translate(1619 356) rotate(-90)">Cube</text>
        <text class="cube-f" transform="translate(1568 467) rotate(-90)">Cube</text>
        <text class="cube-f" transform="translate(1431 491) rotate(-90)">Cube</text>
        <text class="cube-f" transform="translate(1794 487) rotate(-90)">Cube</text>
        <text class="cube-f" transform="translate(1392 556) rotate(-90)">Cube</text>
        <text class="cube-f" transform="translate(1822 554) rotate(-90)">Cube</text>
        <text class="cube-f" transform="translate(1620 554) rotate(-90)">Cube</text>

        <!-- slab labels, top -->
        <use href="#n3" x="1535" y="175"/><text class="lab" x="1552.700" y="182.300">3ø10/10</text>
        <use href="#dh" x="1515.700" y="195.700"/>
        <use href="#n3" x="1728.700" y="175"/><text class="lab" x="1747.700" y="182.300">3ø10/10</text>
        <use href="#dh" x="1710" y="195.700"/>
        <use href="#n4" x="1535" y="226.700"/><text class="lab" x="1552.700" y="233.300">3ø10/10</text>
        <use href="#dh" x="1515.700" y="247.700"/>
        <use href="#n2" x="1620.700" y="226.700"/><text class="lab" x="1639.300" y="233.300">7ø10/10</text>
        <path class="ld" d="M1573.700 237.300V257.300M1691.300 237.300V257.300"/><path class="dim" d="M1573.700 247.700H1691.300"/>
        <use href="#n4" x="1728.700" y="226.700"/><text class="lab" x="1747.700" y="233.300">3ø10/10</text>
        <use href="#dh" x="1710" y="247.700"/>
        <use href="#n2" x="1563.300" y="281.300"/><text class="lab" x="1582.700" y="287.700">1ø10/10</text>
        <path class="ld" d="M1563.300 296V325"/><path class="tk" d="M1558 325L1570 313"/>
        <use href="#n6" x="1684" y="281.300"/><text class="lab" x="1702.700" y="287.700">3ø10/8</text>
        <path class="ld" d="M1684.300 296V315.300"/><path class="tk" d="M1678 315.700L1690 304"/>

        <!-- slab labels, sides -->
        <use href="#n3" transform="translate(1409 359) rotate(-90)"/><text class="lab halo-t" transform="translate(1414.300 340) rotate(-90)">3ø10/10</text>
        <use href="#dv" x="1419.300" y="339.700"/>
        <use href="#n3" transform="translate(1839 359) rotate(-90)"/><text class="lab halo-t" transform="translate(1845 340) rotate(-90)">3ø10/10</text>
        <use href="#dv" x="1849.300" y="339.700"/>
        <use href="#dv" x="1646.700" y="339.700"/>
        <use href="#n4" transform="translate(1636.700 359) rotate(-90)"/><text class="lab halo-t" transform="translate(1642.700 340) rotate(-90)">3ø10/10</text>
        <path class="ld" d="M1595 398.300H1616.700M1595 517.300H1616.700"/><path class="dim" d="M1606.700 398.300V517.300"/>
        <use href="#n2" transform="translate(1586 469.300) rotate(-90)"/><text class="lab halo-t" transform="translate(1592.300 450.300) rotate(-90)">7ø10/10</text>
        <use href="#n2" transform="translate(1446.700 491.700) rotate(-90)"/><text class="lab halo-t" transform="translate(1454 472) rotate(-90)">1ø10/10</text>
        <path class="ld" d="M1462.700 491.700H1501.700"/><path class="tk" d="M1490 486.700L1501.700 496.700"/>
        <use href="#n2" transform="translate(1811 490) rotate(-90)"/><text class="lab halo-t" transform="translate(1816.700 471) rotate(-90)">1ø10/10</text>
        <path class="ld" d="M1763.300 490H1796"/><path class="tk" d="M1763.300 485.700L1775 496.700"/>
        <use href="#n3" transform="translate(1409 557.300) rotate(-90)"/><text class="lab halo-t" transform="translate(1414.300 538) rotate(-90)">3ø10/10</text>
        <use href="#dv" x="1419.300" y="537"/>
        <use href="#n3" transform="translate(1839 557.300) rotate(-90)"/><text class="lab halo-t" transform="translate(1845 538) rotate(-90)">3ø10/10</text>
        <use href="#dv" x="1849.300" y="537"/>
        <use href="#dv" x="1646.700" y="537"/>
        <use href="#n4" transform="translate(1636.700 557.300) rotate(-90)"/><text class="lab halo-t" transform="translate(1642.700 538) rotate(-90)">3ø10/10</text>

        <!-- slab labels, bottom -->
        <path class="ld" d="M1586 591V620"/><path class="tk" d="M1581 602.300L1592.300 591"/>
        <use href="#n2" x="1586" y="635.700"/><text class="lab" x="1606.700" y="641.700">1ø10/10</text>
        <use href="#n3" x="1535" y="663.300"/><text class="lab" x="1552.700" y="670">3ø10/10</text>
        <use href="#dh" x="1515.700" y="684"/>
        <use href="#n3" x="1728.700" y="663.300"/><text class="lab" x="1747.700" y="670">3ø10/10</text>
        <use href="#dh" x="1710" y="684"/>
      </svg>
    </main>
  </div>

  <div class="message">Proszę wybrać funkcję</div>

  <footer class="status">
    <div class="cell c-folia">Folia 10&nbsp;&nbsp; - Stabstahl</div>
    <div class="cell c-seg">Seg.3&nbsp;&nbsp;&nbsp; - Bewehrung</div>
    <div class="cell c-scale">M 1:25.0</div>
    <div class="cell c-r">R</div>
    <div class="cell c-unit">cm</div>
    <div class="cell c-end"></div>
  </footer>
</body>
</html>
```

FILE: styles.css
```css
* {
  box-sizing: border-box;
}
html, body {
  height: 100%;
}
body {
  margin: 0;
  display: flex;
  flex-direction: column;
  overflow: hidden;
  background: #d5daeb;
  font-family: "Open Sans", "Liberation Sans", sans-serif;
  color: #222;
}
.sprites {
  position: absolute;
  width: 0;
  height: 0;
}

/* top toolbar */
.toolbar {
  height: 39px;
  flex: none;
  display: flex;
  align-items: center;
  padding-left: 4.5px;
  background: linear-gradient(to bottom, #dde1ef, #d3d8e9);
}
.tb {
  width: 34.8px;
  height: 28px;
  flex: none;
  display: flex;
  justify-content: center;
}
.ic {
  width: 28px;
  height: 28px;
  display: block;
}
.tb .ic {
  width: 26px;
  height: 26px;
  margin-top: 1px;
}
.ic-c {
  width: 12px;
  height: 28px;
}
.nav-l { width: 44px; }
.nav-c { width: 12px; }
.nav-r { width: 53px; }
.nav-c2 { width: 14px; }
.after-combo { margin-left: 9px; }
.sep {
  width: 1px;
  height: 28px;
  flex: none;
  margin: 0 6px 0 3px;
  background: #8f94a6;
}
.sep-a { margin-right: 4px; }
.sep-w { margin-right: 9px; }
.combo {
  width: 305px;
  height: 23px;
  margin-left: 9px;
  flex: none;
  display: flex;
  align-items: center;
  justify-content: space-between;
  padding: 0 6px 0 3px;
  background: #fff;
  font-size: 14px;
  color: #111;
}
.chev {
  width: 10px;
  height: 7px;
  fill: none;
  stroke: #666;
}

/* body of the window */
.main {
  flex: 1;
  min-height: 0;
  display: flex;
}
.panel {
  width: 186px;
  flex: none;
  display: flex;
  flex-direction: column;
  border-top: 1px solid #eef1f7;
  border-right: 1px solid #eef1f7;
}
.pgroup {
  display: grid;
  grid-template-columns: repeat(4, 46.3px);
  grid-auto-rows: 45px;
  align-items: center;
  justify-items: center;
  border-bottom: 2px solid #b0b3ba;
  box-shadow: 0 1px 0 #eef1f7;
}
.g1 { padding: 1px 0 5px; }
.g2 { padding: 0 0 5px; }
.g3 { padding: 0 0 6px; }
.g4 { padding: 1px 0 3px; }
.g5 { padding: 1px 0 4px; }
.g6 { padding: 2px 0 0; border-bottom: none; box-shadow: none; }
.ptext {
  font-size: 14px;
  font-weight: 600;
  color: #3c5276;
}
.canvas {
  flex: 1;
  min-width: 0;
  background: #fff;
  border-top: 3px solid #a9c3da;
  border-left: 3px solid #a9c3da;
  border-bottom: 3px solid #a7c4d2;
}
.drawing {
  display: block;
  width: 100%;
  height: 100%;
  overflow: visible;
  position: relative;
  z-index: 1;
}

/* bottom */
.message {
  height: 71px;
  flex: none;
  padding: 9px 0 0 197px;
  font: 15px "Liberation Sans", sans-serif;
  letter-spacing: .8px;
  color: #222;
}
.status {
  height: 30px;
  flex: none;
  display: flex;
  background: #f0f0f0;
  border-top: 2px solid #8a8a8a;
  font-size: 14px;
  padding-left: 1079px;
}
.cell {
  height: 100%;
  padding: 2px 0 0 5px;
  border-left: 1px solid #d9d9d9;
  white-space: pre;
  color: #222;
}
.c-folia { width: 258px; }
.c-seg { width: 256px; }
.c-scale { width: 110px; }
.c-r { width: 55px; padding-left: 9px; }
.c-unit { width: 73px; padding-left: 9px; }
.c-end { flex: 1; }

/* icon pieces */
.o { fill: url(#gb); stroke: #2c4d8c; stroke-width: 1.3; }
.op { fill: #7fa3dc; stroke: #2c4d8c; stroke-width: 1.3; }
.d { fill: #2c4d8c; }
.db { fill: #4a6fae; stroke: #2c4d8c; stroke-width: 1; }
.db2 { fill: #8fa9dc; stroke: #2c4d8c; stroke-width: 1; }
.cu { fill: #8fb0e4; stroke: #4a6fae; stroke-width: 1; }
.a { fill: url(#ga); stroke: #e8940f; stroke-width: .8; }
.a2 { fill: #f28c12; stroke: #f7b25a; stroke-width: 1; }
.a3 { fill: #e8c478; stroke: #5c6572; stroke-width: 1.4; }
.ye { fill: #fbc02d; }
.red { fill: #d92b2b; stroke: #a01515; stroke-width: .6; }
.green { fill: #3ecb3e; }
.w { fill: #fff; }
.w-s { fill: #fff; stroke: #2c4d8c; stroke-width: 1; }
.g { fill: #8c8c8c; }
.gd { fill: #666; }
.gp { fill: #5c6e8c; stroke: #2c4d8c; }
.gd-s { fill: none; stroke: #6c6c6c; stroke-width: 1.6; }
.s { fill: none; stroke: #2c4d8c; stroke-width: 1.3; }
.sd { fill: none; stroke: #2c4d8c; stroke-width: 1.1; }
.so { fill: none; stroke: #f09a20; stroke-width: 1.3; }
.so2 { fill: none; stroke: #f09a20; stroke-width: 2; }
.so3 { fill: none; stroke: #f09a20; stroke-width: 3; }
.sa { fill: none; stroke: #e87a20; stroke-width: 2; }
.sa3 { fill: none; stroke: #f09a20; stroke-width: 2.4; }
.sg { fill: none; stroke: #6c7686; stroke-width: 1.5; }
.sg-d { fill: none; stroke: #6c7686; stroke-width: 1.5; stroke-dasharray: 2 1; }
.sg-d2 { fill: none; stroke: #4a5c7c; stroke-width: 1.3; }
.sw { fill: none; stroke: #fff; stroke-width: 1; }
.sw2 { fill: none; stroke: #fff; stroke-width: 2; }
.h { fill: none; stroke: #2c4d8c; stroke-width: 3; }
.hb { fill: none; stroke: #2c4d8c; stroke-width: 2; }
.hb3 { fill: none; stroke: #3f66a8; stroke-width: 3; }
.ha { fill: none; stroke: #f09a20; stroke-width: 3.5; }
.hg { fill: none; stroke: #8c99ad; stroke-width: 2; }
.hg2 { fill: none; stroke: #777; stroke-width: 2.4; }
.hg3 { fill: none; stroke: #8c8c8c; stroke-width: 3.5; }
.xo { fill: none; stroke: #f5a63a; stroke-width: 5; }
.xg { fill: none; stroke: #8c8c8c; stroke-width: 5; }
.xg2 { fill: none; stroke: #8c8c8c; stroke-width: 7.5; }
.sdash { fill: #f2f5fb; stroke: #2c4d8c; stroke-width: 1.2; stroke-dasharray: 2 1.5; }
.sdash2 { fill: #f2f5fb; stroke: #2c4d8c; stroke-width: 1.3; stroke-dasharray: 2 1.5; }
.gear { fill: #d5daeb; stroke: #4a6fae; stroke-width: 3; }
.gear-t { fill: none; stroke: #4a6fae; stroke-width: 2.5; stroke-dasharray: 2.5 2.6; }
.gear-a { fill: #fff2d0; stroke: #f5a623; stroke-width: 2.2; }
.gear-at { fill: none; stroke: #f5a623; stroke-width: 2; stroke-dasharray: 2 1.7; }
.ic-t-w { font: bold 10px "Liberation Sans", sans-serif; fill: #fff; text-anchor: middle; }
.ic-t-p { font: bold 6px "Liberation Sans", sans-serif; fill: #fff; text-anchor: middle; }
.ic-t-d { font: 10px "Liberation Sans", sans-serif; fill: #2c4d8c; text-anchor: middle; }
.ic-t-l { font: 11px "Liberation Sans", sans-serif; fill: #2c4d8c; text-anchor: middle; }
.ic-t-a { font: bold 30px "Liberation Serif", serif; fill: #1f3f80; text-anchor: middle; }
.ic-t-s { font: 7px "Liberation Sans", sans-serif; fill: #3c4a60; text-anchor: middle; }
.ic-t-sup { font: bold 9px "Liberation Sans", sans-serif; fill: #2c4d8c; text-anchor: middle; }

/* drawing */
.cad text {
  font-family: "Liberation Sans", Arial, sans-serif;
}
.out { fill: none; stroke: #666; stroke-width: 1.6; }
.out-big { fill: #fff; stroke: #444; stroke-width: 1.6; }
.out-d { fill: none; stroke: #111; stroke-width: 1; }
.out-thin { fill: none; stroke: #777; stroke-width: 1.4; }
.inner { fill: #f7fcfc; stroke: #8d9cac; stroke-width: 1.1; }
.bar-k { fill: none; stroke: #56657e; stroke-width: 1.1; }
.bar-g { fill: none; stroke: #45b86a; stroke-width: 1.2; }
.bar-b { fill: none; stroke: #7d93a8; stroke-width: 1.1; }
.bar-h { fill: none; stroke: #5f7185; stroke-width: 1; }
.halo { fill: #fcfefe; }
.hole { fill: #fff; stroke: #555; stroke-width: 1.4; }
.ld { fill: none; stroke: #111; stroke-width: 1.1; }
.tk { fill: none; stroke: #777; stroke-width: .8; }
.dim { fill: none; stroke: #333; stroke-width: 1.1; marker-start: url(#ah); marker-end: url(#ah); }
.head { fill: none; stroke: #888; stroke-width: 1; }
.head-g { fill: none; stroke: #4ec06a; stroke-width: 1; }
.tick-g { fill: none; stroke: #5cc56f; stroke-width: 1.1; }
.dim-g { fill: none; stroke: #5cc56f; stroke-width: 1.1; marker-start: url(#ahg); marker-end: url(#ahg); }
.bub { fill: #fff; stroke: #333; stroke-width: 1; }
.bub-g { fill: #fff; stroke: #62c374; stroke-width: 1; }
.num { font-size: 20px; fill: #46597a; text-anchor: middle; }
.num-g { font-size: 20px; fill: #2aa544; text-anchor: middle; }
.lab { font-size: 15.3px; fill: #333; }
.halo-t { paint-order: stroke; stroke: #fff; stroke-width: 3px; }
.lab-g { font-size: 15.3px; fill: #58c06c; }
.cube-g { font-size: 12px; font-style: italic; fill: #58c06c; }
.cube-f { font-size: 12px; font-style: italic; fill: #e9edef; }
```
